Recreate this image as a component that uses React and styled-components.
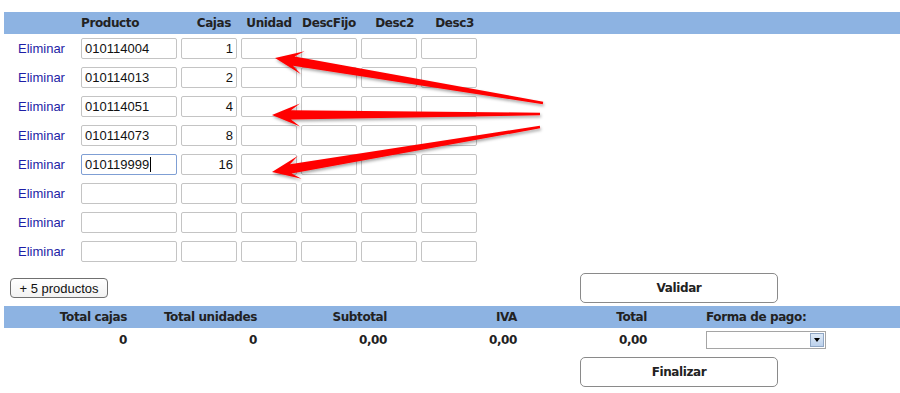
import React from 'react'
import styled, { createGlobalStyle } from 'styled-components'

const GlobalStyle = createGlobalStyle`
  body {
    margin: 0;
    background: #fff;
    font-family: 'Liberation Sans', Arial, sans-serif;
  }
`

const COLS = '73px 96px 56px 56px 56px 56px 56px'

const rows = [
  { code: '010114004', qty: '1' },
  { code: '010114013', qty: '2' },
  { code: '010114051', qty: '4' },
  { code: '010114073', qty: '8' },
  { code: '010119999', qty: '16', focused: true },
  {},
  {},
  {},
]

const headers = [
  { label: '', align: 'left', pr: 0 },
  { label: 'Producto', align: 'left', pr: 0 },
  { label: 'Cajas', align: 'right', pr: 6 },
  { label: 'Unidad', align: 'center', pr: 0 },
  { label: 'DescFijo', align: 'center', pr: 0 },
  { label: 'Desc2', align: 'right', pr: 3 },
  { label: 'Desc3', align: 'right', pr: 3 },
]

const totals = [
  { label: 'Total cajas', value: '0' },
  { label: 'Total unidades', value: '0' },
  { label: 'Subtotal', value: '0,00' },
  { label: 'IVA', value: '0,00' },
  { label: 'Total', value: '0,00' },
]

// flechas rojas encima de la tabla (tail -> tip)
const arrows = [
  { tail: [543, 103], tip: [275, 58] },
  { tail: [540, 114], tip: [272, 115] },
  { tail: [540, 127], tip: [272, 172] },
]

const arrowPoints = ({ tail, tip }) => {
  const dx = tip[0] - tail[0]
  const dy = tip[1] - tail[1]
  const len = Math.hypot(dx, dy)
  const u = [dx / len, dy / len]
  const n = [-u[1], u[0]]
  const at = (d, w) => [tip[0] - u[0] * d + n[0] * w, tip[1] - u[1] * d + n[1] * w]
  const pts = [
    [tail[0] + n[0] * 1.3, tail[1] + n[1] * 1.3],
    at(19, 4.6),
    at(28, 11.5),
    tip,
    at(28, -11.5),
    at(19, -4.6),
    [tail[0] - n[0] * 1.3, tail[1] - n[1] * 1.3],
  ]
  return pts.map((p) => p.map((v) => v.toFixed(1)).join(',')).join(' ')
}

const App = () => {
  return (
    <StPage>
      <GlobalStyle />
      <StHeaderBar>
        {headers.map((h, i) => (
          <StHeadCell key={i} $align={h.align} $pr={h.pr}>
            {h.label}
          </StHeadCell>
        ))}
      </StHeaderBar>

      <StRows>
        {rows.map((r, i) => (
          <StRow key={i}>
            <StDeleteLink href="#">Eliminar</StDeleteLink>
            <StField $focused={r.focused}>
              {r.code}
              {r.focused && <StCaret />}
            </StField>
            <StField $align="right">{r.qty}</StField>
            <StField />
            <StField />
            <StField />
            <StField />
          </StRow>
        ))}
      </StRows>

      <StActionRow>
        <StSmallButton>+ 5 productos</StSmallButton>
        <StBigButton $ml={472}>Validar</StBigButton>
      </StActionRow>

      <StTotalsBar>
        {totals.map((t) => (
          <StTotalCell key={t.label}>{t.label}</StTotalCell>
        ))}
        <StTotalCell $left>Forma de pago:</StTotalCell>
      </StTotalsBar>
      <StTotalsValues>
        {totals.map((t) => (
          <StTotalCell key={t.label}>{t.value}</StTotalCell>
        ))}
        <StTotalCell $left>
          <StSelect>
            <StSelectButton />
          </StSelect>
        </StTotalCell>
      </StTotalsValues>

      <StActionRow $mt={5}>
        <StBigButton $ml={580}>Finalizar</StBigButton>
      </StActionRow>

      <StArrows width="900" height="393" viewBox="0 0 900 393">
        <defs>
          <filter id="arrowShadow" x="-10%" y="-50%" width="120%" height="200%">
            <feDropShadow dx="1" dy="2" stdDeviation="1.6" floodColor="#000" floodOpacity="0.35" />
          </filter>
        </defs>
        {arrows.map((a, i) => (
          <polygon key={i} points={arrowPoints(a)} fill="#ff0606" filter="url(#arrowShadow)" />
        ))}
      </StArrows>
    </StPage>
  )
}

export default App

const StPage = styled.div`
  position: relative;
  width: 900px;
  height: 393px;
  padding-top: 12px;
  box-sizing: border-box;
  overflow: hidden;
`

const StHeaderBar = styled.div`
  margin-left: 4px;
  height: 22px;
  background-color: #8db3e2;
  display: grid;
  grid-template-columns: ${COLS};
  column-gap: 4px;
  align-items: center;
`

const StHeadCell = styled.div`
  font-family: 'DejaVu Sans', Tahoma, sans-serif;
  font-size: 12px;
  font-weight: 700;
  letter-spacing: -0.4px;
  color: #222;
  text-align: ${(p) => p.$align};
  padding-right: ${(p) => p.$pr}px;
  white-space: nowrap;
`

const StRows = styled.div`
  margin: 4px 0 0 4px;
  display: flex;
  flex-direction: column;
  gap: 8px;
`

const StRow = styled.div`
  display: grid;
  grid-template-columns: ${COLS};
  column-gap: 4px;
  align-items: center;
`

const StDeleteLink = styled.a`
  padding-left: 14px;
  font-size: 13px;
  color: #1e1ea6;
  text-decoration: none;
`

const StField = styled.div`
  height: 21px;
  box-sizing: border-box;
  border: 1px solid ${(p) => (p.$focused ? '#7f9fd4' : '#c4c4c4')};
  border-radius: 2px;
  background: #fff;
  display: flex;
  align-items: center;
  justify-content: ${(p) => (p.$align === 'right' ? 'flex-end' : 'flex-start')};
  padding: 0 3px;
  font-size: 13px;
  color: #111;
`

const StCaret = styled.span`
  display: inline-block;
  width: 1px;
  height: 15px;
  margin-left: 1px;
  background: #000;
`

const StActionRow = styled.div`
  display: flex;
  align-items: center;
  height: 30px;
  margin-top: ${(p) => (p.$mt === undefined ? 11 : p.$mt)}px;
  padding-left: ${(p) => (p.$mt === undefined ? 10 : 0)}px;
`

const StSmallButton = styled.button`
  width: 98px;
  height: 20px;
  padding: 0;
  border: 1px solid #707070;
  border-radius: 4px;
  background: linear-gradient(#ffffff, #f2f2f2);
  font-family: 'Liberation Sans', Arial, sans-serif;
  font-size: 13px;
  color: #111;
`

const StBigButton = styled.button`
  margin-left: ${(p) => p.$ml}px;
  width: 198px;
  height: 30px;
  padding: 0;
  border: 1px solid #8a8a8a;
  border-radius: 5px;
  background: #fff;
  font-family: 'DejaVu Sans', Tahoma, sans-serif;
  font-size: 12px;
  font-weight: 700;
  letter-spacing: -0.4px;
  color: #222;
`

const StTotalsBar = styled.div`
  margin: 3px 0 0 4px;
  height: 22px;
  background-color: #8db3e2;
  display: grid;
  grid-template-columns: repeat(5, 130px) 1fr;
  align-items: center;
`

const StTotalsValues = styled.div`
  margin-left: 4px;
  height: 24px;
  display: grid;
  grid-template-columns: repeat(5, 130px) 1fr;
  align-items: center;
`

const StTotalCell = styled.div`
  font-family: 'DejaVu Sans', Tahoma, sans-serif;
  font-size: 12px;
  font-weight: 700;
  letter-spacing: -0.4px;
  color: #222;
  white-space: nowrap;
  padding: ${(p) => (p.$left ? '0 0 0 52px' : '0 7px 0 0')};
  display: flex;
  justify-content: ${(p) => (p.$left ? 'flex-start' : 'flex-end')};
`

const StSelect = styled.div`
  width: 120px;
  height: 18px;
  box-sizing: border-box;
  border: 1px solid #a5a5a5;
  background: #fff;
  display: flex;
  justify-content: flex-end;
  align-items: center;
  padding-right: 1px;
`

const StSelectButton = styled.div`
  width: 14px;
  height: 14px;
  box-sizing: border-box;
  border: 1px solid #8fa6c4;
  background: linear-gradient(#dde9f7, #bcd1ec);
  display: flex;
  align-items: center;
  justify-content: center;

  &::after {
    content: '';
    border-left: 3.5px solid transparent;
    border-right: 3.5px solid transparent;
    border-top: 4px solid #000;
  }
`

const StArrows = styled.svg`
  position: absolute;
  top: 0;
  left: 0;
  pointer-events: none;
`
